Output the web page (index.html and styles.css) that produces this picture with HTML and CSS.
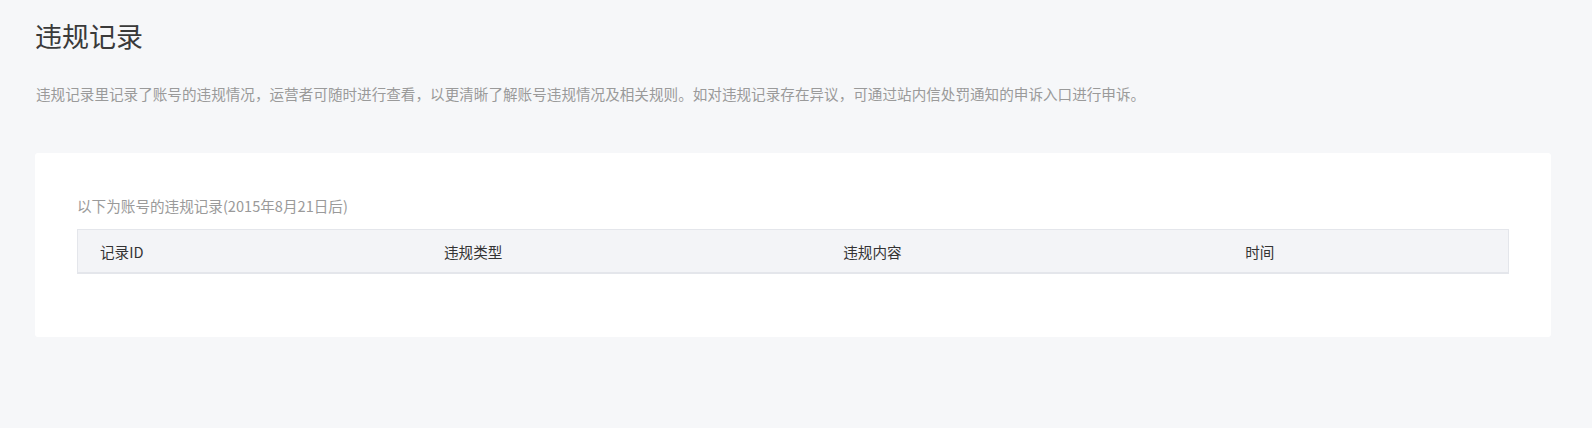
FILE: index.html
```html
<!DOCTYPE html>
<html lang="zh-CN">
<head>
  <meta charset="UTF-8" />
  <title>违规记录</title>
  <link rel="stylesheet" href="styles.css">
</head>
<body>

  <div class="page">
    <h1 class="title">违规记录</h1>
    <p class="desc">违规记录里记录了账号的违规情况，运营者可随时进行查看，以更清晰了解账号违规情况及相关规则。如对违规记录存在异议，可通过站内信处罚通知的申诉入口进行申诉。</p>

    <div class="card">
      <p class="caption">以下为账号的违规记录(2015年8月21日后)</p>
      <table class="records">
        <thead>
          <tr>
            <th class="col-id">记录ID</th>
            <th class="col-type">违规类型</th>
            <th class="col-content">违规内容</th>
            <th class="col-time">时间</th>
          </tr>
        </thead>
        <tbody></tbody>
      </table>
    </div>
  </div>

</body>
</html>
```

FILE: styles.css
```css
body {
  margin: 0;
  background-color: #f6f7f9;
  font-family: "Noto Sans CJK SC", "Noto Sans", sans-serif;
  color: #333;
}
.page { padding: 16px 41px 40px 35px; }
.title {
  margin: 0;
  font-size: 27px;
  font-weight: normal;
  line-height: 40px;
  color: #3a3a3a;
}
.desc {
  margin: 28px 0 0 1px;
  font-size: 14.6px;
  line-height: 20px;
  color: #9a9a9a;
}
.card {
  margin-top: 49px;
  padding: 43px 42px 63px;
  background-color: #fff;
  border-radius: 3px;
}
.caption {
  margin: 0 0 13px;
  font-size: 14.6px;
  line-height: 20px;
  color: #9a9a9a;
}
table.records {
  width: 100%;
  border-collapse: collapse;
  table-layout: fixed;
}
table.records th {
  height: 42px;
  padding: 0 0 0 22px;
  text-align: left;
  font-size: 14.6px;
  font-weight: normal;
  color: #333;
  background-color: #f3f4f7;
  border-top: 1px solid #e4e6eb;
  border-bottom: 2px solid #e4e6eb;
}
table.records th:first-child { border-left: 1px solid #e4e6eb; }
table.records th:last-child { border-right: 1px solid #e4e6eb; }
.col-id { width: 24%; }
.col-type { width: 28.1%; }
.col-content { width: 28.3%; }
.col-time { width: 19.6%; }
```
